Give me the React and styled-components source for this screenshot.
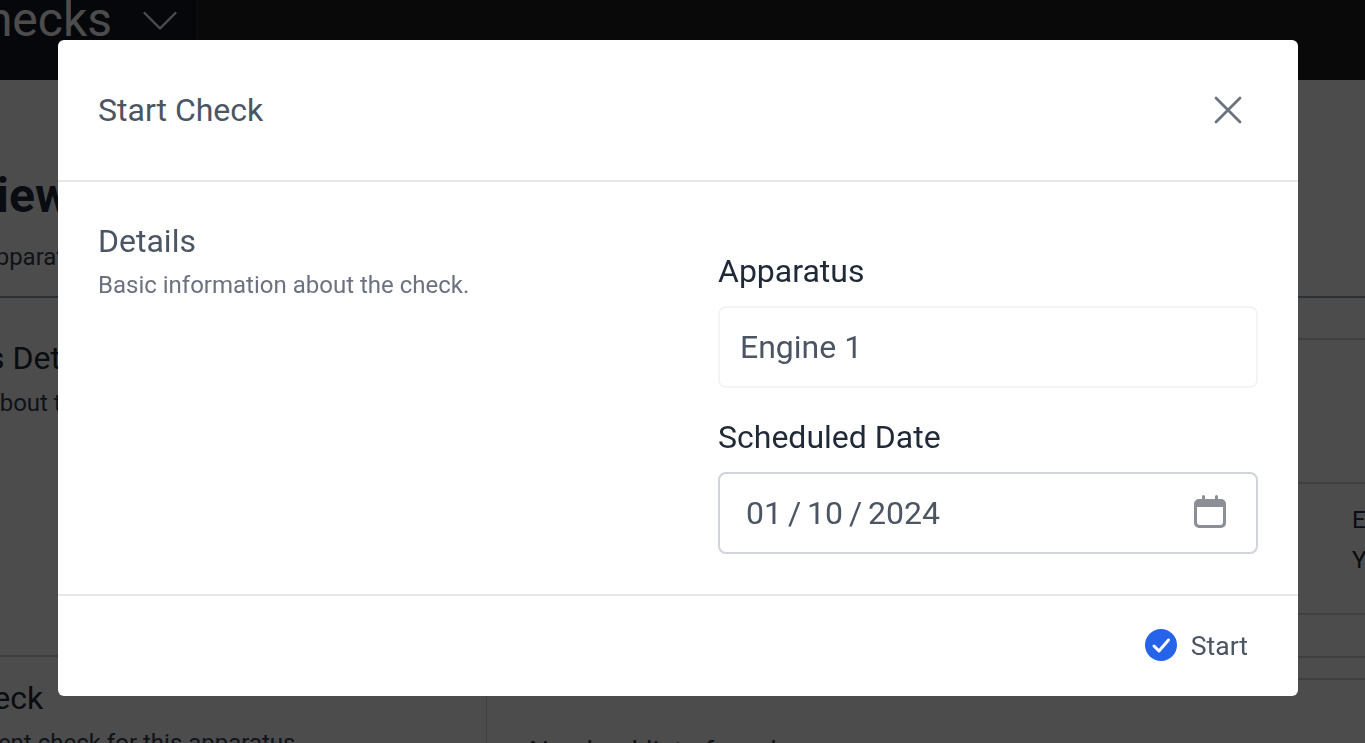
import React from "react";
import styled, { createGlobalStyle } from "styled-components";

const Global = createGlobalStyle`
  html, body { margin: 0; padding: 0; height: 100%; overflow: hidden; background: #fff; }
  body { font-family: Roboto, "Liberation Sans", sans-serif; }
  * { box-sizing: border-box; }
`;

const Page = styled.div`
  width: 1365px;
  height: 743px;
  overflow: hidden;
  background: #fff;
  color: #1f2937;
`;
const Nav = styled.div`
  height: 80px;
  background: #212121;
  display: flex;
`;
const NavTab = styled.div`
  width: 197px;
  height: 80px;
  background: #111827;
  border-right: 1px solid #1f2937;
  display: flex;
  align-items: flex-start;
  justify-content: flex-end;
  padding: 0 19px 0 0;
  gap: 31px;
  overflow: hidden;
  color: #fff;
  font-size: 48px;
  line-height: 48px;
  white-space: nowrap;
`;
const NavLabel = styled.span`
  margin-top: -4px;
`;
const NavChevron = styled.svg`
  width: 34px;
  height: 34px;
  margin-top: 4px;
  flex: none;
`;
const Main = styled.div`
  display: grid;
  grid-template-columns: 487px 1fr;
  height: 663px;
`;
const Left = styled.div`
  border-right: 1px solid #d1d5db;
  overflow: hidden;
`;
const PageHead = styled.div`
  height: 218px;
  border-bottom: 2px solid #9ca3af;
  padding-top: 87px;
`;
const Shifted = styled.div`
  white-space: nowrap;
  margin-left: ${(p) => p.$shift}px;
`;
const H1 = styled(Shifted)`
  font-size: 48px;
  line-height: 58px;
  font-weight: 700;
`;
const Sub = styled(Shifted)`
  font-size: 24px;
  line-height: 32px;
  margin-top: 16px;
  color: #374151;
`;
const Section = styled.div`
  height: 359px;
  padding-top: 41px;
  border-bottom: 2px solid #d1d5db;
`;
const SecTitle = styled(Shifted)`
  font-size: 32px;
  line-height: 38px;
`;
const SecText = styled(Shifted)`
  font-size: 24px;
  line-height: 32px;
  margin-top: 10px;
  color: #374151;
`;
const StartSection = styled.div`
  padding-top: 22px;
`;
const Right = styled.div`
  overflow: hidden;
  display: flex;
  flex-direction: column;
`;
const Rule = styled.div`
  height: ${(p) => p.$h}px;
  flex: none;
  border-bottom: 2px solid ${(p) => p.$c || "#d1d5db"};
`;
const InfoRow = styled.div`
  height: 131px;
  flex: none;
  border-bottom: 2px solid #d1d5db;
  padding: 16px 0 0 865px;
  font-size: 24px;
  line-height: 40px;
  white-space: nowrap;
`;
const EmptyText = styled.div`
  padding: 56px 0 0 42px;
  font-size: 28px;
  line-height: 32px;
  color: #374151;
  white-space: nowrap;
`;

const Overlay = styled.div`
  position: fixed;
  inset: 0;
  background: rgba(0, 0, 0, 0.7);
  display: flex;
  justify-content: flex-start;
  padding: 40px 0 0 58px;
`;
const Modal = styled.div`
  width: 1240px;
  height: 656px;
  background: #fff;
  border-radius: 6px;
  display: flex;
  flex-direction: column;
`;
const ModalHead = styled.div`
  height: 142px;
  flex: none;
  border-bottom: 2px solid #e5e7eb;
  padding: 0 48px 0 40px;
  display: flex;
  align-items: center;
  justify-content: space-between;
  color: #4b5563;
`;
const ModalTitle = styled.div`
  font-size: 32px;
  line-height: 40px;
`;
const CloseIcon = styled.svg`
  width: 48px;
  height: 48px;
  margin-right: -2px;
  color: #6b7280;
`;
const ModalBody = styled.div`
  flex: 1;
  display: grid;
  grid-template-columns: 660px 1fr;
  border-bottom: 2px solid #e5e7eb;
`;
const Intro = styled.div`
  padding: 39px 0 0 40px;
`;
const IntroTitle = styled.div`
  font-size: 32px;
  line-height: 40px;
  color: #4b5563;
`;
const IntroText = styled.div`
  font-size: 24px;
  line-height: 32px;
  margin-top: 8px;
  color: #6b7280;
`;
const Fields = styled.div`
  padding: 69px 40px 0 0;
  display: flex;
  flex-direction: column;
`;
const Label = styled.div`
  font-size: 32px;
  line-height: 40px;
  color: #1f2937;
  margin-bottom: 15px;
`;
const Field = styled.div`
  height: 82px;
  border: 2px solid ${(p) => (p.$disabled ? "#f3f4f6" : "#d1d5db")};
  border-radius: 8px;
  display: flex;
  align-items: center;
  justify-content: space-between;
  padding: 0 28px 0 ${(p) => (p.$disabled ? 20 : 26)}px;
  margin-bottom: ${(p) => (p.$disabled ? 29 : 0)}px;
  font-size: 32px;
  color: #4b5563;
`;
const DateValue = styled.span`
  word-spacing: -2px;
`;
const CalIcon = styled.svg`
  width: 36px;
  height: 36px;
  color: #8b8f96;
`;
const ModalFoot = styled.div`
  height: 100px;
  flex: none;
  display: flex;
  align-items: center;
  justify-content: flex-end;
  padding: 0 50px 2px 0;
  gap: 13px;
  font-size: 26.6px;
  color: #4b5563;
`;
const CheckIcon = styled.svg`
  width: 34px;
  height: 34px;
  margin-top: -1px;
`;

export default function App() {
  return (
    <>
      <Global />
      <Page>
        <Nav>
          <NavTab>
            <NavLabel>Checks</NavLabel>
            <NavChevron viewBox="0 0 34 34" fill="none" stroke="#fff" strokeWidth="2.4" strokeLinecap="round" strokeLinejoin="round">
              <path d="M1.500 9L17 24.500 32.500 9" />
            </NavChevron>
          </NavTab>
        </Nav>
        <Main>
          <Left>
            <PageHead>
              <H1 $shift={-129}>Overview</H1>
              <Sub $shift={-20}>Apparatus</Sub>
            </PageHead>
            <Section>
              <SecTitle $shift={-142}>Apparatus Details</SecTitle>
              <SecText $shift={-16}>About the apparatus</SecText>
            </Section>
            <StartSection>
              <SecTitle $shift={-122}>Start Check</SecTitle>
              <SecText $shift={-112}>Start a recent check for this apparatus</SecText>
            </StartSection>
          </Left>
          <Right>
            <Rule $h={218} $c="#9ca3af" />
            <Rule $h={42} />
            <Rule $h={144} />
            <InfoRow>
              <div>Engine</div>
              <div>Yes</div>
            </InfoRow>
            <Rule $h={43} />
            <Rule $h={22} />
            <EmptyText>No checklists found</EmptyText>
          </Right>
        </Main>
        <Overlay>
          <Modal>
            <ModalHead>
              <ModalTitle>Start Check</ModalTitle>
              <CloseIcon viewBox="0 0 24 24" fill="none" stroke="currentColor" strokeWidth="1.4" strokeLinecap="round" strokeLinejoin="round">
                <path d="M6 6l12 12M18 6L6 18" />
              </CloseIcon>
            </ModalHead>
            <ModalBody>
              <Intro>
                <IntroTitle>Details</IntroTitle>
                <IntroText>Basic information about the check.</IntroText>
              </Intro>
              <Fields>
                <Label>Apparatus</Label>
                <Field $disabled>Engine 1</Field>
                <Label>Scheduled Date</Label>
                <Field>
                  <DateValue>01 / 10 / 2024</DateValue>
                  <CalIcon viewBox="0 0 36 36" fill="none">
                    <path d="M10 1.500a1.500 1.500 0 0 1 3 0V4h10V1.500a1.500 1.500 0 0 1 3 0V4h3a5 5 0 0 1 5 5v19a5 5 0 0 1-5 5H7a5 5 0 0 1-5-5V9a5 5 0 0 1 5-5h3V1.500zM5 12v15a3 3 0 0 0 2 3h22a3 3 0 0 0 2-3V12H5z" fill="currentColor" fillRule="evenodd" />
                  </CalIcon>
                </Field>
              </Fields>
            </ModalBody>
            <ModalFoot>
              <CheckIcon viewBox="0 0 34 34" fill="none">
                <circle cx="17" cy="17" r="16" fill="#2563eb" />
                <path d="M10 18l5 5 9.500-11" stroke="#fff" strokeWidth="3" strokeLinecap="round" strokeLinejoin="round" />
              </CheckIcon>
              <span>Start</span>
            </ModalFoot>
          </Modal>
        </Overlay>
      </Page>
    </>
  );
}
